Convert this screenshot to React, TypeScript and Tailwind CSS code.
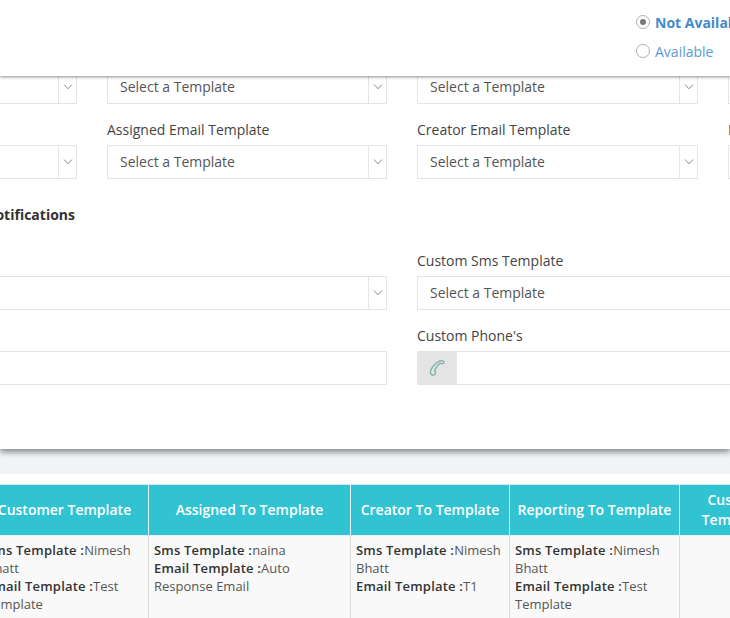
import React from 'react';

const Chevron = () => (
  <svg width="10" height="6" viewBox="0 0 10 6" fill="none" stroke="#888" strokeWidth="1">
    <path d="M1 0.5 L5 4.8 L9 0.5" />
  </svg>
);

const Phone = () => (
  <svg width="16" height="16" viewBox="0 0 16 16" fill="none" stroke="#7fb5aa" strokeWidth="1.4">
    <path d="M10 1.4 C11.6 0.4 14.2 0.6 14.8 1.8 C15.2 2.8 14 4 13 3.8 L11.4 3.2 C9 4.4 6.2 8.4 5.6 11 L6.4 12.4 C6.8 13.2 6 14.8 4.8 15 C3 15.4 1.2 14 1.4 11.8 C1.8 8 6 3.4 10 1.4 Z" />
  </svg>
);

const SelectBox = ({ label, text = 'Select a Template' }: { label?: string; text?: string }) => (
  <div>
    {label && <label className="block text-[14px] leading-[20px] mb-[5px] text-[#444] whitespace-nowrap">{label}</label>}
    <div className="flex h-[34px] border border-[#e5e5e5] bg-white">
      <div className="flex-1 pl-3 leading-[32px] text-[14px] text-[#555] whitespace-nowrap">{text}</div>
      <div className="w-[18px] border-l border-[#e5e5e5] flex items-center justify-center">
        <Chevron />
      </div>
    </div>
  </div>
);

const cellCls = 'border border-[#dcdcdc] px-[5px] pt-[5px] align-top text-[13px] leading-[18px] text-[#555] bg-[#f9f9f9] h-[90px]';
const headCls = 'border border-[#e3f3f6] border-t-[#cfeaf0] bg-[#31c3d2] text-white font-semibold text-[14px] leading-[20px] text-center px-0 h-[51px]';

const Cell = ({ sms, email }: { sms: string; email: string }) => (
  <td className={cellCls}>
    <b className="text-[#333] font-semibold tracking-[0.2px]">Sms Template :</b>{sms}
    <br />
    <b className="text-[#333] font-semibold tracking-[0.2px]">Email Template :</b>{email}
  </td>
);

export default function App() {
  return (
    <div className="w-[730px] h-[618px] overflow-hidden bg-white font-['Open_Sans',sans-serif]">
      {/* top bar lies over the form */}
      <div className="relative z-10 h-[76px] bg-white shadow-[0_1px_3px_rgba(0,0,0,0.45)] pl-[636px] pt-[12px] text-[14px] whitespace-nowrap overflow-hidden">
        <div className="flex items-center gap-[5px] h-[20px]">
          <span className="w-[14px] h-[14px] rounded-full border border-[#b0b0b0] flex items-center justify-center shrink-0">
            <span className="w-[6px] h-[6px] rounded-full bg-[#777]" />
          </span>
          <span className="font-bold text-[#428bca]">Not Available</span>
        </div>
        <div className="flex items-center gap-[5px] h-[20px] mt-[9px]">
          <span className="w-[14px] h-[14px] rounded-full border border-[#b0b0b0] shrink-0" />
          <span className="text-[#5b9bd0]">Available</span>
        </div>
      </div>

      {/* form card */}
      <div className="relative h-[373px] bg-white shadow-[0_3px_6px_rgba(0,0,0,0.45)] overflow-hidden">
        <div className="w-[1240px] -ml-[203px] -mt-[6px]">
          <div className="grid grid-cols-[280px_280px_281px_280px] gap-x-[30px]">
            <SelectBox />
            <SelectBox />
            <SelectBox />
            <SelectBox />
          </div>
          <div className="grid grid-cols-[280px_280px_281px_280px] gap-x-[30px] mt-[16px]">
            <SelectBox label="Customer Email Template" />
            <SelectBox label="Assigned Email Template" />
            <SelectBox label="Creator Email Template" />
            <SelectBox label="Reporting Email Template" />
          </div>
          <div className="w-[278px] flex justify-end mt-[26px] font-bold text-[14px] leading-[20px] text-[#333] whitespace-nowrap">
            Custom Notifications
          </div>
          <div className="grid grid-cols-[590px_590px] gap-x-[30px] mt-[26px]">
            <SelectBox label="Custom Email Template" />
            <SelectBox label="Custom Sms Template" />
          </div>
          <div className="grid grid-cols-[590px_590px] gap-x-[30px] mt-[16px]">
            <div>
              <label className="block text-[14px] leading-[20px] mb-[5px] text-[#444]">Custom Email's</label>
              <div className="h-[34px] border border-[#e5e5e5] bg-white" />
            </div>
            <div>
              <label className="block text-[14px] leading-[20px] mb-[5px] text-[#444]">Custom Phone's</label>
              <div className="flex h-[34px] border border-[#e5e5e5] bg-white rounded-[2px]">
                <div className="w-[40px] -m-px bg-[#e4e4e4] rounded-l-[2px] flex items-center justify-center">
                  <Phone />
                </div>
              </div>
            </div>
          </div>
        </div>
      </div>

      <div className="h-[25px] bg-[#f1f3f7]" />

      {/* assigned templates */}
      <div className="bg-white pt-[10px] overflow-hidden">
        <table className="table-fixed border-collapse -ml-[20px] w-[807px]">
          <colgroup>
            <col className="w-[168px]" />
            <col className="w-[202px]" />
            <col className="w-[159px]" />
            <col className="w-[170px]" />
            <col className="w-[108px]" />
          </colgroup>
          <thead>
            <tr>
              <th className={headCls}>Customer Template</th>
              <th className={headCls}>Assigned To Template</th>
              <th className={headCls}>Creator To Template</th>
              <th className={headCls}>Reporting To Template</th>
              <th className={headCls}>Custom Template</th>
            </tr>
          </thead>
          <tbody>
            <tr>
              <Cell sms="Nimesh Bhatt" email="Test Template" />
              <Cell sms="naina" email="Auto Response Email" />
              <Cell sms="Nimesh Bhatt" email="T1" />
              <Cell sms="Nimesh Bhatt" email="Test Template" />
              <td className={cellCls} />
            </tr>
          </tbody>
        </table>
      </div>
    </div>
  );
}
